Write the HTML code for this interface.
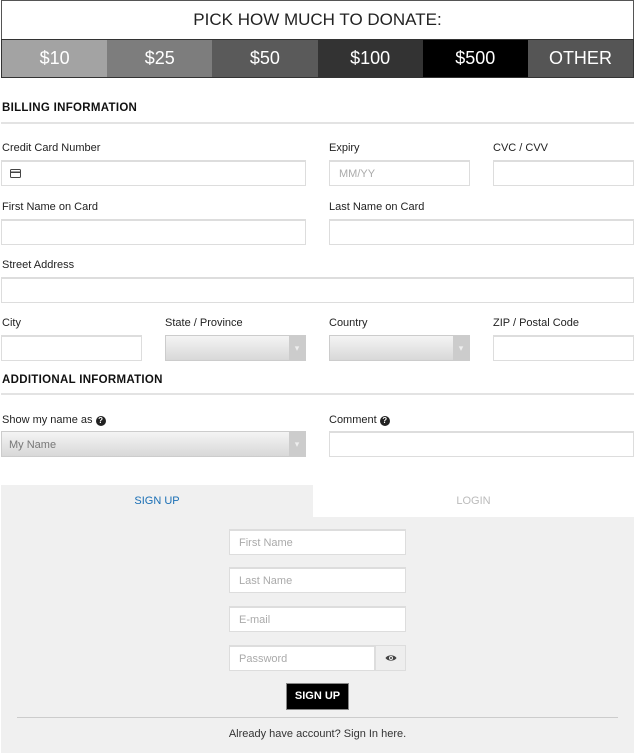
<!DOCTYPE html>
<html><head><meta charset="utf-8"><style>
*{box-sizing:border-box;margin:0;padding:0}
body{width:635px;height:753px;background:#fff;font-family:"Liberation Sans",sans-serif;color:#222;position:relative;overflow:hidden}
.a{position:absolute}
.hdr{left:1px;top:0;width:633px;height:40px;border:1px solid #555;text-align:center;font-size:17px;line-height:38px;color:#222}
.btns{left:1px;top:39px;width:633px;height:39px;border:1px solid #333;display:flex}
.btns div{flex:1;color:#fff;text-align:center;font-size:18px;line-height:37px}
.h{font-size:11.5px;font-weight:bold;letter-spacing:.3px;color:#111}
.hr{height:2px;background:#e3e3e3}
.l{font-size:11px;color:#222}
.in{border:1px solid #ddd;border-top:2px solid #ddd;background:#fff;height:26px;font-size:11px;color:#aaa;padding-left:9px;line-height:24px}
.sel{border:1px solid #ccc;background:linear-gradient(#f4f4f4,#d8d8d8);height:26px;font-size:11px;color:#777;padding-left:7px;line-height:26px}
.sel:after{content:"▾";position:absolute;right:0;top:0;width:16px;height:24px;background:#ccc;color:#eee;font-size:9px;text-align:center;line-height:24px}
.tabs{left:1px;top:485px;width:633px;height:268px;background:#f0f0f0}
</style></head><body>
<div class="a hdr">PICK HOW MUCH TO DONATE:</div>
<div class="a btns"><div style="background:#a3a3a3">$10</div><div style="background:#7d7d7d">$25</div><div style="background:#5a5a5a">$50</div><div style="background:#333">$100</div><div style="background:#000">$500</div><div style="background:#555">OTHER</div></div>

<div class="a h" style="left:2px;top:102px">BILLING INFORMATION</div>
<div class="a hr" style="left:1px;top:122px;width:633px"></div>

<div class="a l" style="left:2px;top:142px">Credit Card Number</div>
<div class="a l" style="left:329px;top:142px">Expiry</div>
<div class="a l" style="left:493px;top:142px">CVC / CVV</div>
<div class="a in" style="left:1px;top:160px;width:305px"><svg width="11" height="9" style="margin-top:7px;margin-left:-1px" viewBox="0 0 11 9"><rect x=".5" y=".5" width="10" height="8" rx="1" fill="none" stroke="#444"/><rect x="1" y="2.5" width="9" height="1.5" fill="#444"/></svg></div>
<div class="a in" style="left:329px;top:160px;width:141px">MM/YY</div>
<div class="a in" style="left:493px;top:160px;width:141px"></div>

<div class="a l" style="left:2px;top:201px">First Name on Card</div>
<div class="a l" style="left:329px;top:201px">Last Name on Card</div>
<div class="a in" style="left:1px;top:219px;width:305px"></div>
<div class="a in" style="left:329px;top:219px;width:305px"></div>

<div class="a l" style="left:2px;top:259px">Street Address</div>
<div class="a in" style="left:1px;top:277px;width:633px"></div>

<div class="a l" style="left:2px;top:317px">City</div>
<div class="a l" style="left:165px;top:317px">State / Province</div>
<div class="a l" style="left:329px;top:317px">Country</div>
<div class="a l" style="left:493px;top:317px">ZIP / Postal Code</div>
<div class="a in" style="left:1px;top:335px;width:141px"></div>
<div class="a sel" style="left:165px;top:335px;width:141px"></div>
<div class="a sel" style="left:329px;top:335px;width:141px"></div>
<div class="a in" style="left:493px;top:335px;width:141px"></div>

<div class="a h" style="left:2px;top:374px">ADDITIONAL INFORMATION</div>
<div class="a hr" style="left:1px;top:393px;width:633px"></div>

<div class="a l" style="left:2px;top:414px">Show my name as <b style="display:inline-block;width:10px;height:10px;border-radius:50%;background:#222;color:#fff;font-size:8px;text-align:center;line-height:10px">?</b></div>
<div class="a l" style="left:329px;top:414px">Comment <b style="display:inline-block;width:10px;height:10px;border-radius:50%;background:#222;color:#fff;font-size:8px;text-align:center;line-height:10px">?</b></div>
<div class="a sel" style="left:1px;top:431px;width:305px">My Name</div>
<div class="a in" style="left:329px;top:431px;width:305px"></div>

<div class="a tabs"></div>
<div class="a" style="left:313px;top:485px;width:321px;height:32px;background:#fff"></div>
<div class="a" style="left:1px;top:495px;width:312px;text-align:center;font-size:11px;color:#1a6fb5">SIGN UP</div>
<div class="a" style="left:313px;top:495px;width:321px;text-align:center;font-size:11px;color:#bbb">LOGIN</div>

<div class="a in" style="left:229px;top:529px;width:177px">First Name</div>
<div class="a in" style="left:229px;top:567px;width:177px">Last Name</div>
<div class="a in" style="left:229px;top:606px;width:177px">E-mail</div>
<div class="a in" style="left:229px;top:645px;width:146px">Password</div>
<div class="a" style="left:375px;top:645px;width:31px;height:26px;border:1px solid #ddd;background:#eee;text-align:center"><svg width="12" height="8" viewBox="0 0 12 8" style="margin-top:8px"><path d="M0.5 4C2.5 0.5 9.5 0.5 11.5 4C9.5 7.5 2.5 7.5 0.5 4Z" fill="#444"/><circle cx="6" cy="4" r="2" fill="#eee"/><circle cx="6" cy="4" r="1" fill="#444"/></svg></div>
<div class="a" style="left:286px;top:683px;width:63px;height:27px;background:#000;border:1px solid #888;color:#fff;font-size:11px;font-weight:bold;text-align:center;line-height:25px">SIGN UP</div>
<div class="a" style="left:17px;top:717px;width:601px;height:1px;background:#ccc"></div>
<div class="a" style="left:1px;top:728px;width:633px;text-align:center;font-size:11px;color:#333">Already have account? Sign In here.</div>
</body></html>
